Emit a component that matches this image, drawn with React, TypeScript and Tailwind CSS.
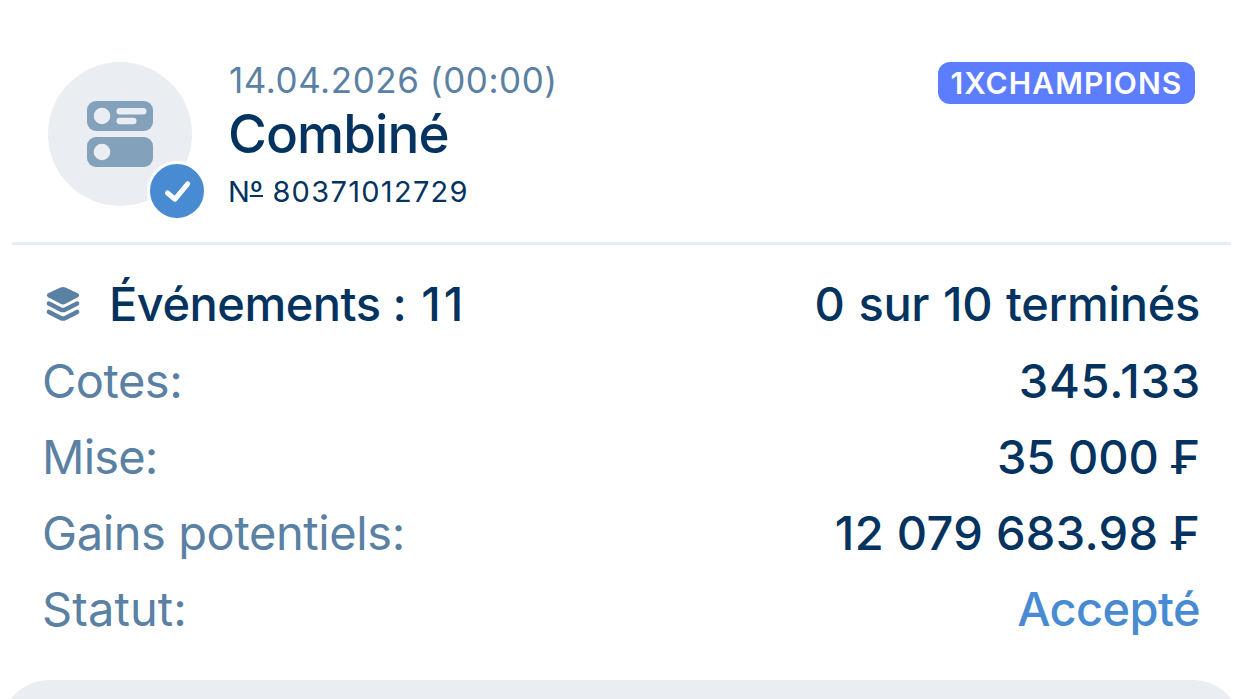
import React from 'react';
import clsx from 'clsx';

interface Row {
  label: string;
  value: string;
  labelClass: string;
  valueClass: string;
}

const ROWS: Row[] = [
  { label: 'Cotes:', value: '345.133', labelClass: 'tracking-[-0.5px]', valueClass: 'tracking-[0.8px] mr-[-1px]' },
  { label: 'Mise:', value: '35 000 ₣', labelClass: 'tracking-[-0.8px]', valueClass: 'tracking-[0px]' },
  { label: 'Gains potentiels:', value: '12 079 683.98 ₣', labelClass: 'tracking-[-0.4px]', valueClass: 'tracking-[0.3px]' },
];

const CouponIcon: React.FC = () => (
  <svg width="66" height="66" viewBox="0 0 66 66" fill="none">
    <rect width="66" height="30" rx="9" fill="#84A1BB" />
    <rect y="36" width="66" height="30" rx="9" fill="#84A1BB" />
    <circle cx="15" cy="15" r="8.3" fill="#EAEEF3" />
    <circle cx="15" cy="51" r="8.3" fill="#EAEEF3" />
    <rect x="29.5" y="7" width="30" height="6.5" rx="3.25" fill="#EAEEF3" />
    <rect x="29.5" y="16.8" width="20" height="6.5" rx="3.25" fill="#EAEEF3" />
  </svg>
);

const LayersIcon: React.FC = () => (
  <svg width="32" height="34" viewBox="0 0 32 34" fill="#5A81A3" className="overflow-visible">
    <path d="M13.5 0.6 Q16 -0.5 18.5 0.6 L30.8 6.2 Q33.6 8.2 30.8 10.2 L18.5 16.8 Q16 18 13.5 16.8 L1.2 10.2 Q-1.6 8.2 1.2 6.2 Z" />
    <path
      d="M1.9 16.5 L13.6 22.5 Q16 23.7 18.4 22.5 L30.1 16.5 M1.9 24.9 L13.6 30.9 Q16 32.1 18.4 30.9 L30.1 24.9"
      fill="none"
      stroke="#5A81A3"
      strokeWidth="4.5"
      strokeLinecap="round"
    />
  </svg>
);

const App: React.FC = () => {
  return (
    <div className="h-[699px] w-full overflow-hidden bg-white font-['Inter',sans-serif] text-[#04335F] flex flex-col">
      {/* Header */}
      <header className="ml-3 mr-[11px] h-[245px] shrink-0 border-b-3 border-[#E8EAF4] pl-9 pr-9 pt-[62px] flex items-start">
        <div className="relative w-36 h-36 shrink-0 rounded-full bg-[#EAEEF3] flex items-center justify-center">
          <CouponIcon />
          <div className="absolute left-[99px] top-[99px] w-[60px] h-[60px] rounded-full border-3 border-white bg-[#488BD3] flex items-center justify-center">
            <svg width="54" height="54" viewBox="0 0 54 54" fill="none">
              <path d="M17.5 29 L25 35.2 L37.7 19.8" stroke="#fff" strokeWidth="5" strokeLinecap="round" strokeLinejoin="round" />
            </svg>
          </div>
        </div>
        <div className="ml-[37px] flex flex-col items-start whitespace-nowrap">
          <p className="h-[37px] text-[35px] leading-[37px] tracking-[0.55px] text-[#5A81A3]">14.04.2026 (00:00)</p>
          <h1 className="-ml-px h-[71px] text-[53px] leading-[70px] font-medium tracking-[-0.9px]">Combiné</h1>
          <p className="-ml-px h-[44px] text-[29px] leading-[44px] tracking-[1.3px]">
            <span className="tracking-[0px]">N</span>
            <span className="tracking-[0px] underline decoration-2 underline-offset-[-7px] [text-decoration-skip-ink:none]">º</span> 80371012729
          </p>
        </div>
        <div className="ml-auto w-[257px] h-[42px] rounded-xl bg-[#5C7DFD] flex items-center justify-center whitespace-nowrap text-[30px] font-semibold tracking-[1.1px] text-white">
          1XCHAMPIONS
        </div>
      </header>

      {/* Bet details */}
      <main className="pl-[42px] pr-[42px] pt-[22px] text-[47px] leading-[76px] whitespace-nowrap">
        <div className="-mt-px mb-px h-[76px] flex items-center justify-between font-medium">
          <div className="flex items-center">
            <div className="ml-[5px] mr-[30px]">
              <LayersIcon />
            </div>
            <span className="tracking-[-0.5px]">
              Événements <span className="tracking-[1px]">: </span>
              <span className="tracking-[3px] [font-kerning:none]">11</span>
            </span>
          </div>
          <span className="tracking-[-0.35px] [word-spacing:1.7px]">0 sur 10 terminés</span>
        </div>
        {ROWS.map((row) => (
          <div key={row.label} className="h-[76px] flex items-center justify-between">
            <span className={clsx('text-[#5A81A3]', row.labelClass)}>{row.label}</span>
            <span className={clsx('font-medium', row.valueClass)}>{row.value}</span>
          </div>
        ))}
        <div className="h-[76px] flex items-center justify-between">
          <span className="tracking-[0.1px] text-[#5A81A3]">Statut:</span>
          <span className="font-medium tracking-[-0.6px] text-[#488BD3]">Accepté</span>
        </div>
      </main>

      {/* Top edge of the next card */}
      <div className="mx-px mt-[33px] h-24 shrink-0 rounded-t-[48px] bg-[#EAEDF2]" />
    </div>
  );
};

export default App;
